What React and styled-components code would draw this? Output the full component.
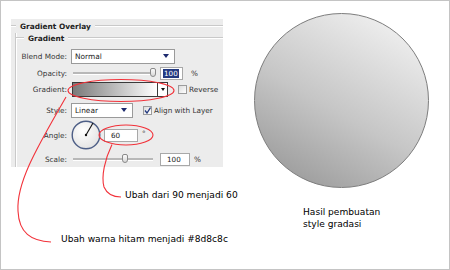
import styled, { createGlobalStyle } from "styled-components";

const GlobalStyle = createGlobalStyle`
  html, body { margin: 0; padding: 0; background: #fff; }
  body { font-family: "DejaVu Sans", Verdana, sans-serif; }
`;

const Canvas = styled.div`
  position: relative;
  width: 450px;
  height: 270px;
  box-sizing: border-box;
  border: 1px solid #c4c4c4;
  display: flex;
  overflow: hidden;
`;

const LeftCol = styled.div`
  width: 253px;
  padding-top: 18px;
  display: flex;
  flex-direction: column;
`;

const RightCol = styled.div`
  flex: 1;
  padding-top: 12px;
  display: flex;
  flex-direction: column;
`;

const Panel = styled.div`
  margin-left: 10px;
  width: 212px;
  height: 148px;
  background: #ececec;
  display: flex;
  flex-direction: column;
  color: #333;
  font-size: 7.3px;
`;

const Legend = styled.div`
  display: flex;
  align-items: center;
  height: ${(p) => p.$h}px;
  font-weight: bold;
  font-size: 7.4px;
  color: #222;
  &::before {
    content: "";
    width: ${(p) => p.$lead}px;
    border-top: 1px solid #c9c9c9;
    border-bottom: 1px solid #fff;
    margin-right: 4px;
  }
  &::after {
    content: "";
    flex: 1;
    border-top: 1px solid #c9c9c9;
    border-bottom: 1px solid #fff;
    margin-left: 4px;
  }
`;

const Fieldset = styled.div`
  margin-left: 4px;
  flex: 1;
  border-left: 1px solid #c9c9c9;
  box-shadow: inset 1px 0 0 #fff;
  display: flex;
  flex-direction: column;
`;

const Rows = styled.div`
  padding-top: 4px;
  padding-left: 1px;
  display: flex;
  flex-direction: column;
`;

const Row = styled.div`
  display: flex;
  align-items: center;
  height: ${(p) => p.$h}px;
  margin-top: ${(p) => p.$mt || 0}px;
`;

const Label = styled.span`
  width: 50px;
  text-align: right;
  margin-right: 4px;
  color: #363636;
  white-space: nowrap;
`;

const Select = styled.div`
  width: ${(p) => p.$w}px;
  height: 15px;
  box-sizing: border-box;
  border: 1px solid #9a9a9a;
  background: #fff;
  display: flex;
  align-items: center;
  padding-left: 3px;
  color: #222;
  font-size: 7.4px;
  &::after {
    content: "";
    margin-left: auto;
    margin-right: 5px;
    border-left: 3px solid transparent;
    border-right: 3px solid transparent;
    border-top: 4px solid #1c2a6e;
  }
`;

const Slider = styled.div`
  position: relative;
  width: 80px;
  height: 10px;
  margin-left: 2px;
  &::before {
    content: "";
    position: absolute;
    left: 0;
    right: 0;
    top: 4px;
    height: 2px;
    background: #b8b8b8;
    border-bottom: 1px solid #fff;
  }
`;

const Thumb = styled.div`
  position: absolute;
  top: 0;
  width: 6px;
  height: 9px;
  box-sizing: border-box;
  border: 1px solid #8a8a8a;
  border-radius: 2px 2px 3px 3px;
  background: linear-gradient(#fafafa, #d8d8d8);
`;

const Field = styled.div`
  width: ${(p) => p.$w}px;
  height: 13px;
  box-sizing: border-box;
  margin-left: ${(p) => p.$ml}px;
  border: 1px solid #a8a8a8;
  background: #fff;
  display: flex;
  align-items: center;
  padding-left: ${(p) => p.$pl || 3}px;
  color: #222;
  font-size: 7.2px;
`;

const Selected = styled.span`
  background: #23397f;
  color: #fff;
  padding: 0 1px;
`;

const Unit = styled.span`
  margin-left: ${(p) => p.$ml}px;
  align-self: ${(p) => (p.$top ? "flex-start" : "center")};
  margin-top: ${(p) => (p.$top ? 10 : 0)}px;
  color: #333;
`;

const GradientBar = styled.div`
  margin-left: 1px;
  width: 96px;
  height: 15px;
  box-sizing: border-box;
  border: 1px solid #3a3a3a;
  display: flex;
`;

const GradientFill = styled.div`
  flex: 1;
  background: linear-gradient(90deg, #7a7a7a, #ffffff);
`;

const DropPart = styled.div`
  width: 9px;
  border-left: 1px solid #3a3a3a;
  background: #fff;
  display: flex;
  align-items: center;
  justify-content: center;
  &::after {
    content: "";
    border-left: 2.5px solid transparent;
    border-right: 2.5px solid transparent;
    border-top: 3px solid #111;
  }
`;

const Check = styled.div`
  width: 9px;
  height: 9px;
  margin-left: 10px;
  margin-right: 2px;
  box-sizing: border-box;
  border: 1px solid #9c9c9c;
  background: linear-gradient(135deg, #dcdcdc, #fff);
  display: flex;
  align-items: center;
  justify-content: center;
`;

const CheckText = styled.span`
  color: #333;
  white-space: nowrap;
`;

const Dial = styled.svg`
  flex: none;
`;

const Note = styled.div`
  margin-top: ${(p) => p.$mt}px;
  padding-left: ${(p) => p.$pl}px;
  font-size: 9.1px;
  line-height: 10px;
  color: #000;
  white-space: nowrap;
`;

const Sphere = styled.div`
  width: 175px;
  height: 175px;
  box-sizing: border-box;
  border-radius: 50%;
  border: 1px solid #7d7d7d;
  background: linear-gradient(30deg, #919191 0%, #c6c6c6 45%, #f8f8f8 100%);
`;

const Caption = styled.div`
  margin-top: 18px;
  margin-left: 49px;
  font-size: 9.1px;
  line-height: 12px;
  color: #000;
`;

const Marks = styled.svg`
  position: absolute;
  left: 0;
  top: 0;
  pointer-events: none;
`;

export default function App() {
  return (
    <>
      <GlobalStyle />
      <Canvas>
        <LeftCol>
          <Panel>
            <Legend $h={14} $lead={5}>Gradient Overlay</Legend>
            <Fieldset>
              <Legend $h={10} $lead={8}>Gradient</Legend>
              <Rows>
                <Row $h={18}>
                  <Label>Blend Mode:</Label>
                  <Select $w={104}>Normal</Select>
                </Row>
                <Row $h={16}>
                  <Label>Opacity:</Label>
                  <Slider>
                    <Thumb style={{ left: 77 }} />
                  </Slider>
                  <Field $w={23} $ml={7} $pl={2}>
                    <Selected>100</Selected>
                  </Field>
                  <Unit $ml={8}>%</Unit>
                </Row>
                <Row $h={17}>
                  <Label>Gradient:</Label>
                  <GradientBar>
                    <GradientFill />
                    <DropPart />
                  </GradientBar>
                  <Check />
                  <CheckText>Reverse</CheckText>
                </Row>
                <Row $h={18} $mt={3}>
                  <Label>Style:</Label>
                  <Select $w={62}>Linear</Select>
                  <Check>
                    <svg width="7" height="7" viewBox="0 0 7 7">
                      <path d="M1 3.5 L3 6 L6.5 0.5" fill="none" stroke="#23397f" strokeWidth="1.3" />
                    </svg>
                  </Check>
                  <CheckText>Align with Layer</CheckText>
                </Row>
                <Row $h={32}>
                  <Label>Angle:</Label>
                  <Dial width="30" height="30" viewBox="0 0 30 30">
                    <defs>
                      <radialGradient id="dialFill" cx="0.4" cy="0.35" r="0.7">
                        <stop offset="0" stopColor="#ffffff" />
                        <stop offset="1" stopColor="#e2e2e2" />
                      </radialGradient>
                    </defs>
                    <circle cx="15" cy="15" r="13.8" fill="url(#dialFill)" stroke="#4d5e86" strokeWidth="1.4" />
                    <line x1="15" y1="15" x2="22" y2="3" stroke="#111" strokeWidth="1.1" />
                    <circle cx="15" cy="15" r="1.2" fill="#111" />
                  </Dial>
                  <Field $w={34} $ml={3} $pl={6}>60</Field>
                  <Unit $ml={4} $top>°</Unit>
                </Row>
                <Row $h={16}>
                  <Label>Scale:</Label>
                  <Slider>
                    <Thumb style={{ left: 49 }} />
                  </Slider>
                  <Field $w={30} $ml={7} $pl={6}>100</Field>
                  <Unit $ml={4}>%</Unit>
                </Row>
              </Rows>
            </Fieldset>
          </Panel>
          <Note $mt={23} $pl={124}>Ubah dari 90 menjadi 60</Note>
          <Note $mt={34} $pl={60}>Ubah warna hitam menjadi #8d8c8c</Note>
        </LeftCol>
        <RightCol>
          <Sphere />
          <Caption>
            Hasil pembuatan
            <br />
            style gradasi
          </Caption>
        </RightCol>
        <Marks width="450" height="270" viewBox="0 0 450 270">
          <g fill="none" stroke="#f2323a" strokeWidth="1.1">
            <ellipse cx="120" cy="89.5" rx="53" ry="11" />
            <ellipse cx="125" cy="134" rx="27" ry="10" />
            <path d="M65 96 C40 140 15 180 17 210 C18 232 30 240 50 241" />
            <path d="M111 143.5 C104 158 100 175 103 186 C106 193 112 196 120 196" />
          </g>
        </Marks>
      </Canvas>
    </>
  );
}
